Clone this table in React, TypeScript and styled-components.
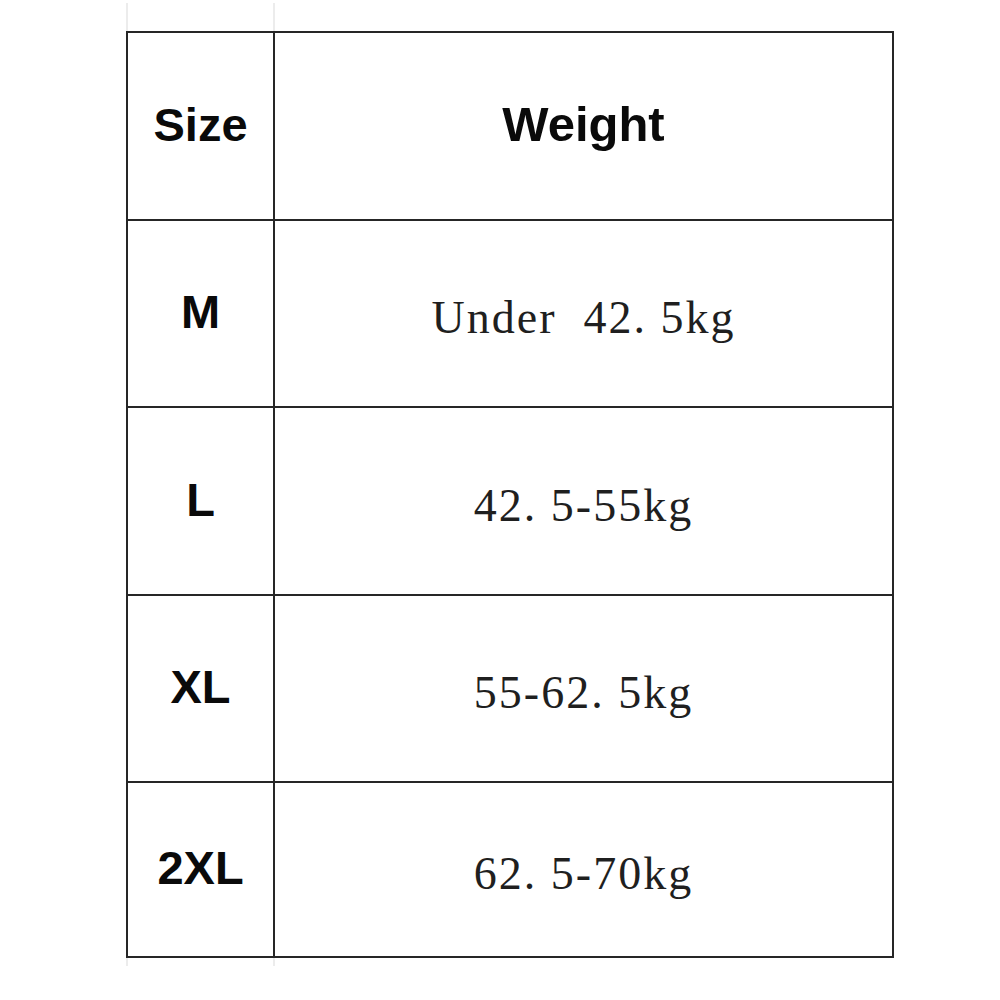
import React from 'react'
import styled, { createGlobalStyle } from 'styled-components'

type SizeRow = {
  size: string
  weight: string
  height: number
}

const rows: SizeRow[] = [
  { size: 'M', weight: 'Under  42. 5kg', height: 187 },
  { size: 'L', weight: '42. 5-55kg', height: 188 },
  { size: 'XL', weight: '55-62. 5kg', height: 187 },
  { size: '2XL', weight: '62. 5-70kg', height: 175 }
]

const GlobalStyle = createGlobalStyle`
  html, body {
    margin: 0;
    padding: 0;
    background: #ffffff;
  }
`

const Page = styled.div`
  width: 1000px;
  height: 1000px;
  padding-left: 126px;
  box-sizing: border-box;
  display: flex;
  flex-direction: column;
  background: #ffffff;
`

const GhostRow = styled.div<{ $short?: boolean }>`
  display: grid;
  grid-template-columns: 147px 621px;
  height: ${({ $short }) => ($short ? '8px' : '28px')};
  margin-top: ${({ $short }) => ($short ? '0' : '3px')};
`

const GhostCell = styled.div`
  border-left: 2px solid #ececec;
`

const Table = styled.div`
  width: 768px;
  box-sizing: border-box;
  border-top: 2px solid #262626;
  border-left: 2px solid #262626;
  border-right: 2px solid #262626;
  display: flex;
  flex-direction: column;
`

const Row = styled.div<{ $height: number }>`
  display: grid;
  grid-template-columns: 145px 1fr;
  height: ${({ $height }) => $height}px;
  box-sizing: border-box;
  border-bottom: 2px solid #262626;
`

const SizeCell = styled.div`
  display: flex;
  align-items: center;
  justify-content: center;
  font-family: 'Liberation Sans', Arial, sans-serif;
  font-weight: 700;
  font-size: 47px;
  color: #0a0a0a;
  padding-bottom: 4px;
`

const HeadCell = styled.div`
  display: flex;
  align-items: center;
  justify-content: center;
  border-left: 2px solid #262626;
  font-family: 'Liberation Sans', Arial, sans-serif;
  font-weight: 700;
  font-size: 49px;
  color: #0a0a0a;
  padding-bottom: 4px;
`

const WeightCell = styled.div`
  display: flex;
  align-items: center;
  justify-content: center;
  border-left: 2px solid #262626;
  font-family: 'Liberation Serif', 'Times New Roman', serif;
  font-size: 46px;
  letter-spacing: 2px;
  white-space: pre;
  color: #1f1f1f;
  padding-top: 8px;
`

export default function App() {
  return (
    <Page>
      <GlobalStyle />
      <GhostRow>
        <GhostCell />
        <GhostCell />
      </GhostRow>
      <Table>
        <Row $height={188}>
          <SizeCell>Size</SizeCell>
          <HeadCell>Weight</HeadCell>
        </Row>
        {rows.map(row => (
          <Row key={row.size} $height={row.height}>
            <SizeCell>{row.size}</SizeCell>
            <WeightCell>{row.weight}</WeightCell>
          </Row>
        ))}
      </Table>
      <GhostRow $short>
        <GhostCell />
        <GhostCell />
      </GhostRow>
    </Page>
  )
}
